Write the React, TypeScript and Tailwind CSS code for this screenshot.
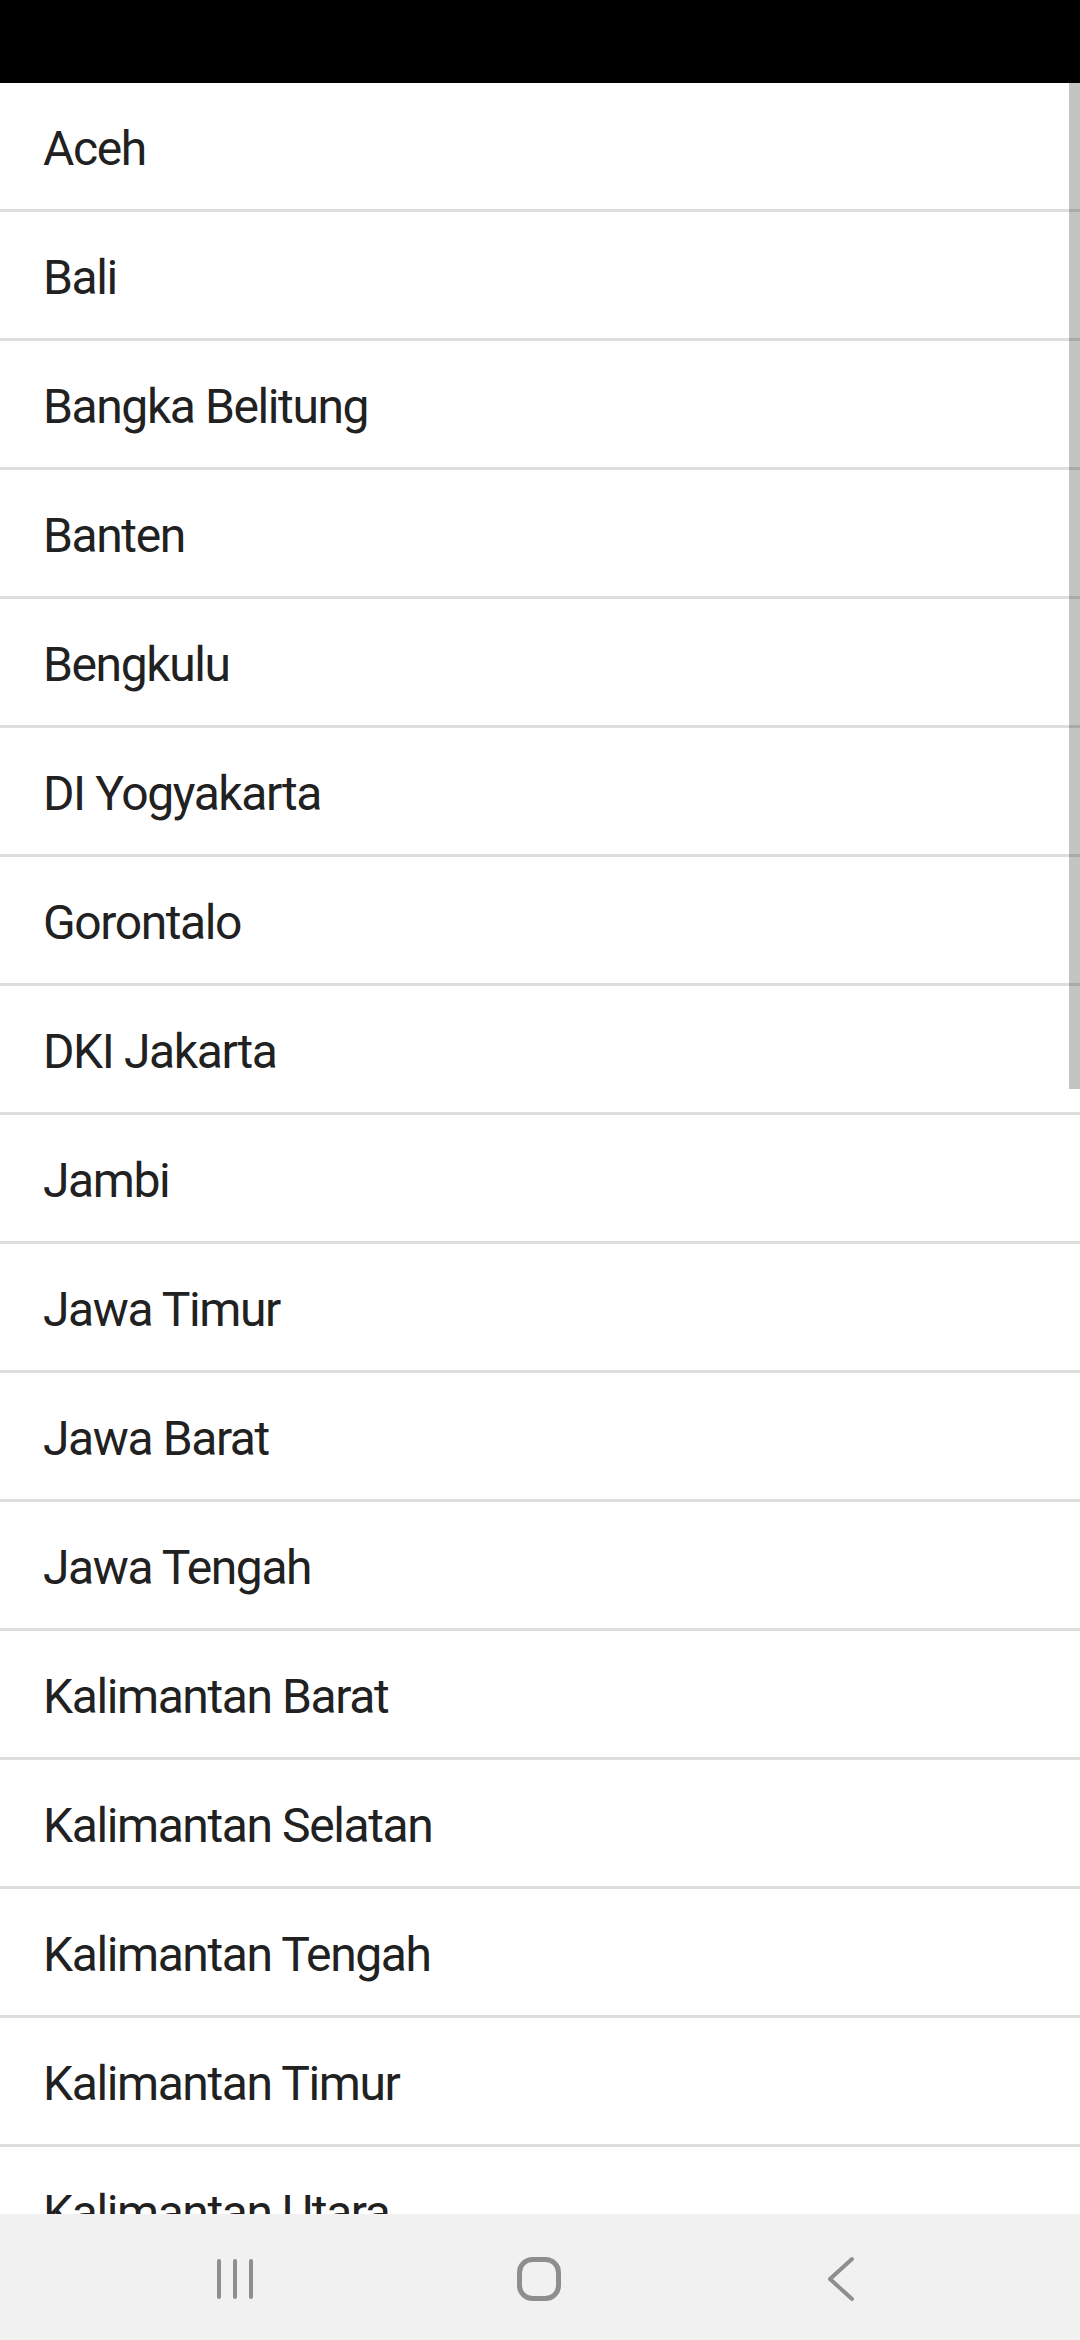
const provinces = [
  'Aceh',
  'Bali',
  'Bangka Belitung',
  'Banten',
  'Bengkulu',
  'DI Yogyakarta',
  'Gorontalo',
  'DKI Jakarta',
  'Jambi',
  'Jawa Timur',
  'Jawa Barat',
  'Jawa Tengah',
  'Kalimantan Barat',
  'Kalimantan Selatan',
  'Kalimantan Tengah',
  'Kalimantan Timur',
  'Kalimantan Utara',
]

function NavBar() {
  return (
    <div className="h-[126px] shrink-0 bg-[#f1f1f1] flex items-center pt-[4px] pl-[175px]">
      {/* recents */}
      <div className="w-[120px] flex justify-center">
        <svg width="40" height="44" viewBox="0 0 40 44">
          <g stroke="#8e8e8e" strokeWidth="4" strokeLinecap="round">
            <line x1="4" y1="4" x2="4" y2="40" />
            <line x1="20" y1="4" x2="20" y2="40" />
            <line x1="36" y1="4" x2="36" y2="40" />
          </g>
        </svg>
      </div>
      {/* home */}
      <div className="w-[120px] ml-[184px] flex justify-center">
        <svg width="46" height="46" viewBox="0 0 46 46">
          <rect x="3.5" y="3.5" width="39" height="39" rx="13" fill="none" stroke="#8e8e8e" strokeWidth="5" />
        </svg>
      </div>
      {/* back */}
      <div className="w-[120px] ml-[182px] flex justify-center">
        <svg width="32" height="46" viewBox="0 0 32 46">
          <polyline
            points="27,3 5,23 27,43"
            fill="none"
            stroke="#8e8e8e"
            strokeWidth="4"
            strokeLinecap="round"
            strokeLinejoin="round"
          />
        </svg>
      </div>
    </div>
  )
}

export default function App() {
  return (
    <div className="w-[1080px] h-[2340px] flex flex-col overflow-hidden bg-white font-['Roboto',sans-serif]">
      <div className="h-[83px] shrink-0 bg-black" />

      <div className="relative flex-1 overflow-hidden">
        <ul>
          {provinces.map((name) => (
            <li
              key={name}
              className="h-[129px] flex items-center pl-[43px] pt-[5px] border-b-[3px] border-[#dedede] text-[48px] tracking-[-1.4px] text-[#212121]"
            >
              {name}
            </li>
          ))}
        </ul>
        {/* scroll indicator */}
        <div className="absolute top-0 right-0 w-[11px] h-[1006px] bg-[rgba(0,0,0,0.23)]" />
      </div>

      <NavBar />
    </div>
  )
}
